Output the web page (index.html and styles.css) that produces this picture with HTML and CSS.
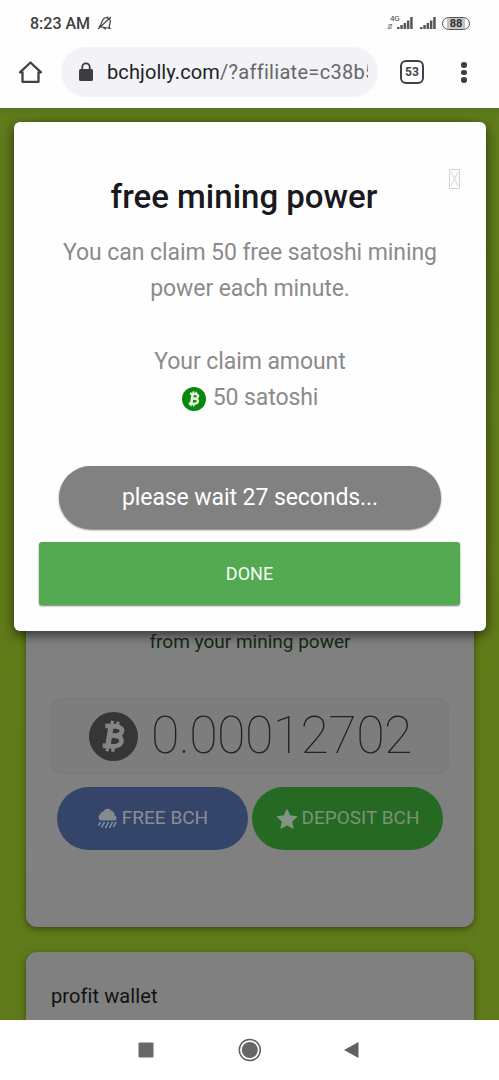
FILE: index.html
```html
<!DOCTYPE html>
<html lang="en">
<head>
<meta charset="utf-8">
<title>bchjolly.com</title>
<link rel="stylesheet" href="styles.css">
</head>
<body>
<svg class="defs" width="0" height="0" aria-hidden="true">
  <symbol id="coin" viewBox="0 0 48 48">
    <circle cx="24" cy="24" r="24" fill="currentColor"/>
    <g fill="none" stroke="var(--mark)" stroke-width="4.600" stroke-linejoin="round">
      <path d="M16 13.500 26 14C31.500 14.500 33 17 32 19.500 31 22.500 27.500 23.500 21.500 23L26 23.500C31.500 24 32.500 27 31.500 30 30 33.500 26 34 20 33.500L13.500 33"/>
      <path d="M21.500 14 18.500 33.500" stroke-width="5.200"/>
      <path d="M23 8.500 22.200 14M28.500 9.500 27.800 14.500M18.500 33 17.700 38.500M24 33.500 23.200 39" stroke-width="3.200"/>
    </g>
  </symbol>
</svg>
<div class="phone">
  <header class="status">
    <span class="time">8:23 AM</span>
    <svg class="bell" width="16" height="16" viewBox="0 0 16 16" fill="none" stroke="#444" stroke-width="1.2"><path d="M3.500 10 5.500 5.500C6.700 3 9 2.300 11 3.200S13.800 6 13 8.500L12 12 13 13.500 2.500 11.500 3.500 10M6.500 13.500 9 14M10.500 3 11 1.500M1 14 14 2"/></svg>
    <span class="net"><span>4G</span><span class="arrows">⇵</span></span>
    <svg class="sig first" width="17" height="12" viewBox="0 0 17 12" fill="#555"><path d="M0 10h2.500v2H0zM3.300 8h2.500v4h-2.500zM6.600 6h2.500v6h-2.500zM9.900 3.500h2.500v8.500h-2.500zM13.200 0h2.500v12h-2.500z"/></svg>
    <svg class="sig" width="17" height="12" viewBox="0 0 17 12" fill="#555"><path d="M0 10h2.500v2H0zM3.300 8h2.500v4h-2.500zM6.600 6h2.500v6h-2.500zM9.900 3.500h2.500v8.500h-2.500zM13.200 0h2.500v12h-2.500z"/></svg>
    <span class="battery"><span>88</span></span>
  </header>
  <div class="toolbar">
    <svg class="home" width="24" height="24" viewBox="0 0 24 24" fill="none" stroke="#3e4044" stroke-width="2.300"><path d="M4.500 12.300H2L12.500 2.500 23 12.300H20.500V21.800H4.500z" stroke-linejoin="round"/></svg>
    <div class="address">
      <svg width="16" height="20" viewBox="0 0 16 20"><rect x="1" y="7" width="14" height="12" rx="1.500" fill="#3c3c43"/><path d="M4.300 8V5a3.700 3.700 0 0 1 7.400 0v3" fill="none" stroke="#3c3c43" stroke-width="1.800"/></svg>
      <span class="url"><b>bchjolly.com</b>/?affiliate=c38b5</span>
    </div>
    <span class="tabs">53</span>
    <span class="more"><i></i><i></i><i></i></span>
  </div>

  <main class="page">
    <section class="card miner">
      <p class="source">from your mining power</p>
      <div class="balance">
        <svg width="49" height="49"><use href="#coin"/></svg>
        <span class="amount">0.00012702</span>
      </div>
      <div class="actions">
        <button class="pill blue">
          <svg width="21" height="22" viewBox="0 0 21 22"><path d="M4 12.500a3.500 3.500 0 0 1-.5-6.500A3.500 3.500 0 0 1 6.500 3.300 4.500 4.500 0 0 1 14.500 3a4 4 0 0 1 3 4.300 2.800 2.800 0 0 1 .5 5.200z" fill="#858a8d"/><path d="M3.500 14 1.500 17.500M7.500 14 4.500 19.500M11.500 14 8.500 20M15.500 14 12.500 20M19 14 16.500 19" stroke="#8297a3" stroke-width="1.500"/></svg>
          <span>FREE BCH</span>
        </button>
        <button class="pill green">
          <svg width="22" height="22" viewBox="0 0 22 22"><path d="m11 2 2.700 6.100 6.700.7-5 4.500 1.400 6.500L11 16.500l-5.800 3.300 1.400-6.500-5-4.500 6.700-.7z" fill="#829580" stroke="#829580" stroke-width="1.500" stroke-linejoin="round"/></svg>
          <span>DEPOSIT BCH</span>
        </button>
      </div>
    </section>
    <section class="card wallet"><span>profit wallet</span></section>

    <div class="modal">
      <svg class="close" width="11" height="20" viewBox="0 0 11 20" fill="none" stroke="#d2d2d2"><path d="M.5.5h10v19H.5zM2 3l7 14M9 3 2 17"/></svg>
      <h2>free mining power</h2>
      <p class="lead"><span>You can claim 50 free satoshi mining</span><br><span>power each minute.</span></p>
      <p class="claim">Your claim amount</p>
      <p class="satoshi"><svg width="24" height="24"><use href="#coin"/></svg><span>50 satoshi</span></p>
      <div class="wait">please wait 27 seconds...</div>
      <button class="done">DONE</button>
    </div>
  </main>

  <nav class="keys">
    <svg width="240" height="26" viewBox="0 0 240 26"><rect x="18.500" y="5.500" width="15" height="15" rx="1" fill="#686868"/><circle cx="129.800" cy="13" r="10.500" fill="none" stroke="#5f5f5f" stroke-width="1.500"/><circle cx="129.800" cy="13" r="8" fill="#666"/><path d="M224 13 238.500 5v16z" fill="#606060"/></svg>
  </nav>
</div>
</body>
</html>
```
FILE: styles.css
```css
* { box-sizing: border-box; }
body { margin: 0; font-family: Roboto, "Liberation Sans", sans-serif; background: #fff; }
p, h2 { margin: 0; }
button { border: 0; font: inherit; padding: 0; }
svg { display: block; flex: none; }
.defs { height: 0; }
.phone { width: 499px; height: 1080px; overflow: hidden; display: flex; flex-direction: column; background: #fefefe; }
.status { height: 46px; flex: none; display: flex; align-items: center; padding: 0 29px 0 30px; color: #404040; }
.time { font-size: 16px; font-weight: 500; }
.bell { margin-left: 7px; }
.net { margin-left: auto; width: 11px; font-size: 8px; line-height: 8px; font-weight: 400; letter-spacing: -.3px; }
.net span { display: block; }
.net .arrows { font-size: 7px; margin-left: -3px; }
.sig { margin-right: 5px; }
.sig.first { margin-left: -4px; margin-right: 6px; }
.battery { width: 28px; height: 13px; border: 1.5px solid #555; border-radius: 7px; padding: 0 4px; display: flex; }
.battery span { flex: 1; background: #c4c4c4; font-size: 11px; line-height: 11px; font-weight: 700; text-align: center; color: #333; }
.toolbar { height: 62px; flex: none; display: flex; align-items: flex-start; padding-left: 18px; }
.home { margin-top: 14px; }
.address { width: 317px; height: 50px; margin: 1px 0 0 19px; border-radius: 25px; background: #f2f2f7; display: flex; align-items: center; padding-left: 17px; }
.url { width: 261px; margin-left: 13px; overflow: hidden; white-space: nowrap; color: #66676b; font-size: 20px; line-height: 28px; letter-spacing: .3px; }
.url b { font-weight: 400; color: #222226; letter-spacing: .1px; }
.tabs { width: 24px; height: 24px; margin: 14px 0 0 22px; border: 2.500px solid #404144; border-radius: 6px; font-size: 12px; font-weight: 700; line-height: 20px; text-align: center; color: #444; }
.more { display: flex; flex-direction: column; gap: 2px; margin: 16px 0 0 37px; }
.more i { width: 5.500px; height: 5.500px; border-radius: 50%; background: #3e4044; }
.page { height: 912px; flex: none; position: relative; overflow: hidden; background: linear-gradient(#55751f, #5f7b1b 8px, #617b18 50%, #5e7a1a); padding: 14px 25px 0 26px; display: flex; flex-direction: column; gap: 25px; }
.card { background: #808080; border-radius: 11px; box-shadow: 0 2px 6px rgba(0, 0, 0, .4); flex: none; }
.miner { height: 805px; padding: 506px 25px 0; width: 448px; }
.source { color: #122b12; font-size: 19px; line-height: 28px; text-align: center; white-space: nowrap; }
.balance { height: 76px; margin-top: 42px; border: 1px solid #797979; border-radius: 11px; background: #7d7d7d; display: flex; align-items: center; padding-left: 37px; }
.balance svg { color: #363636; --mark: #858585; }
.amount { margin-left: 13px; font-size: 52px; line-height: 76px; font-weight: 100; letter-spacing: -.65px; color: #222; white-space: nowrap; }
.actions { margin: 13px 0 0 6px; display: flex; gap: 4px; }
.pill { width: 191px; height: 63px; flex: none; border-radius: 32px; color: #8c8e92; font-size: 19px; display: flex; align-items: center; justify-content: center; gap: 4px; white-space: nowrap; line-height: 61px; }
.pill span { height: 63px; }
.blue { background: #35456a; }
.green { background: #266923; color: #799477; }
.wallet { height: 110px; padding: 30px 25px; font-size: 20px; line-height: 28px; letter-spacing: .1px; color: #111; }
.modal { position: absolute; left: 14px; top: 14px; width: 472px; height: 509px; border-radius: 6px; background: #fefefe; box-shadow: 0 4px 12px rgba(0, 0, 0, .6); padding: 53px 25px 0; text-align: center; color: #8b8b8b; font-size: 23px; line-height: 36px; letter-spacing: -.08px; white-space: nowrap; }
.close { position: absolute; left: 435px; top: 47px; }
.modal h2 { color: #19191e; font-size: 33px; line-height: 44px; font-weight: 500; letter-spacing: 0; margin-right: 12px; }
.lead { margin-top: 16px; }
.claim { margin-top: 37px; }
.satoshi { display: flex; align-items: center; justify-content: center; gap: 7px; }
.satoshi svg { color: #088811; --mark: #e8f3df; margin-top: 1px; }
.wait { width: 382px; height: 63px; margin: 50px 0 0 20px; border-radius: 32px; background: #818181; box-shadow: 0 1px 2px #777; color: #fff; line-height: 63px; }
.done { display: block; width: 421px; height: 63px; margin-top: 13px; border-radius: 3px; background: #54aa52; box-shadow: 0 1px 2px #777; color: #f5fff4; font-size: 18px; line-height: 63px; }
.keys { height: 60px; flex: none; background: #fff; display: flex; align-items: center; padding-left: 120px; }
```
